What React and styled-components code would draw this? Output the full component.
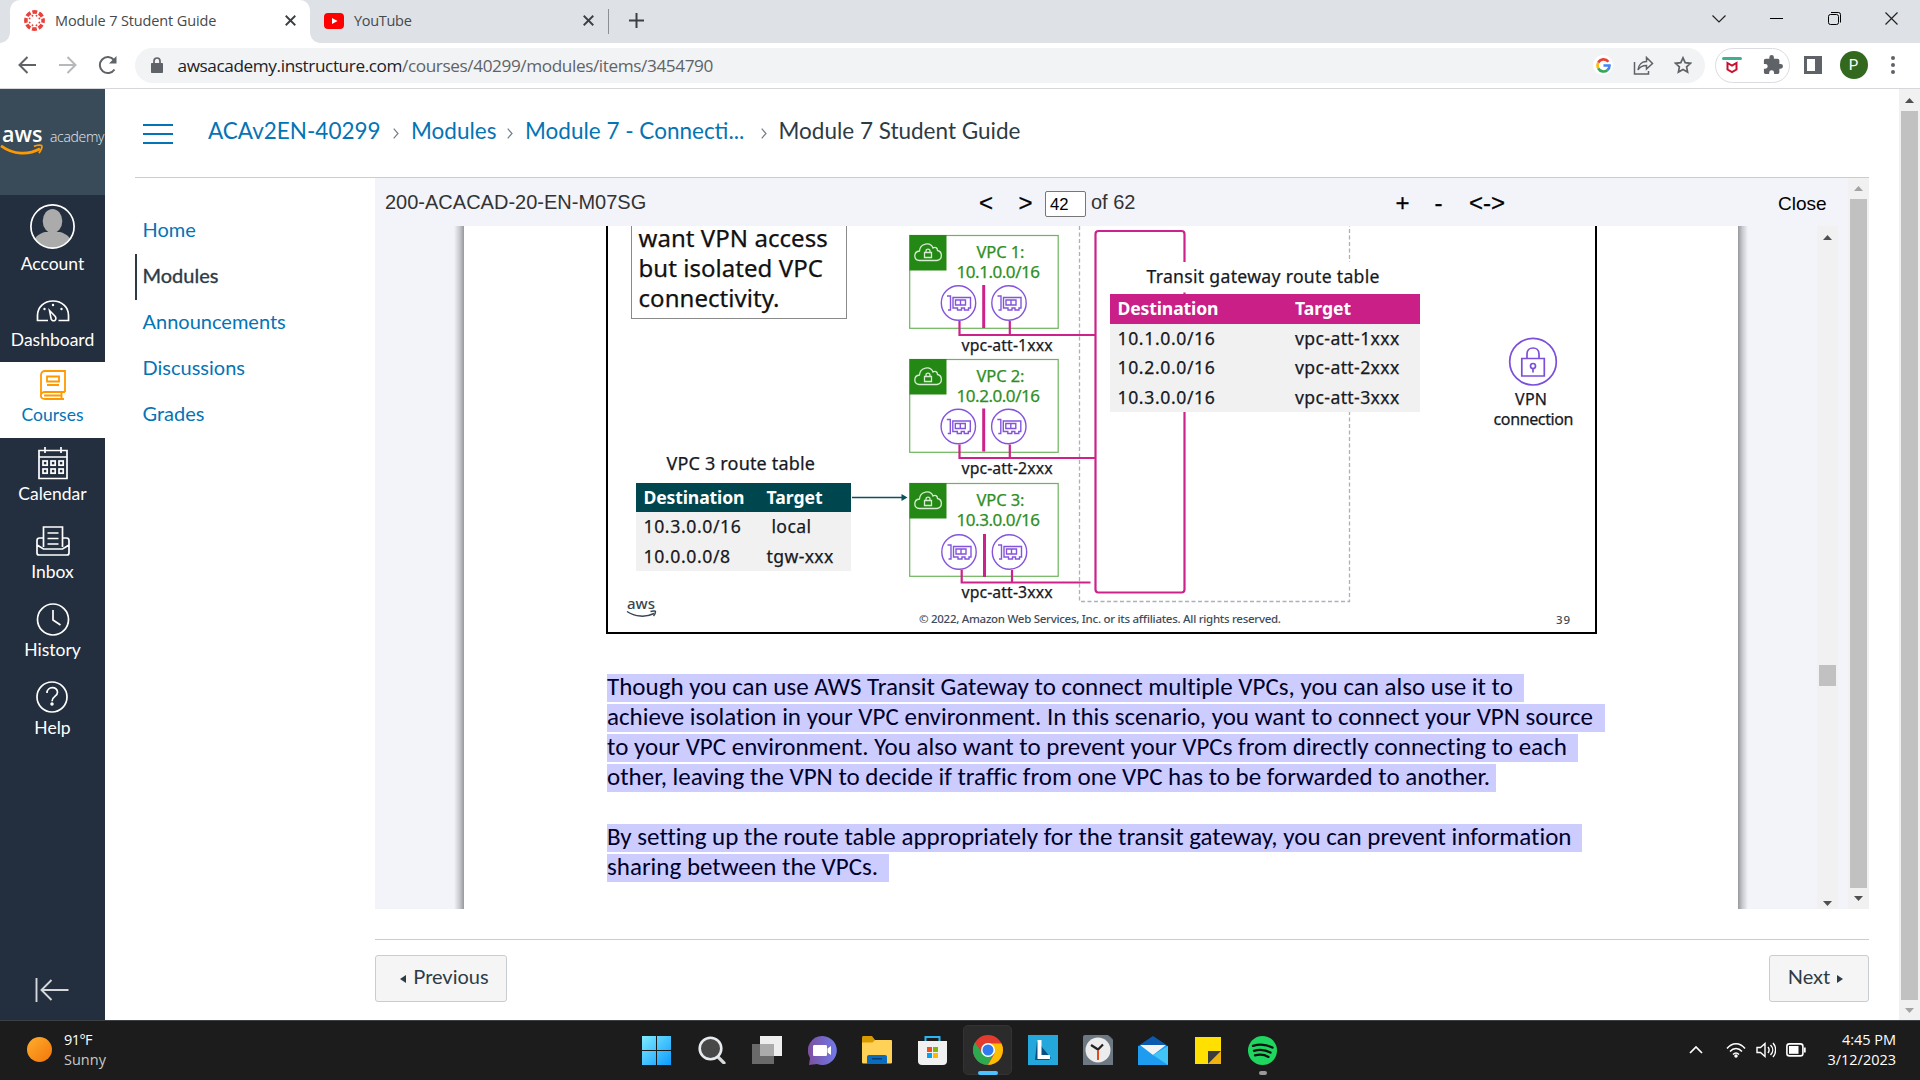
import React from "react";
import styled, { createGlobalStyle } from "styled-components";

const ui = `"Open Sans", "Noto Sans", sans-serif`;
const lato = `Lato, "Open Sans", sans-serif`;
const slideFont = `"Noto Sans", "Open Sans", sans-serif`;
const arial = `"Liberation Sans", Arial, sans-serif`;

const Global = createGlobalStyle`
  * { box-sizing: border-box; }
  body { margin: 0; overflow: hidden; background: #fff; }
  svg { display: block; flex: none; }
`;

const Screen = styled.div`
  width: 1920px;
  height: 1080px;
  display: flex;
  flex-direction: column;
  background: #fff;
  overflow: hidden;
`;

/* ---------- browser chrome ---------- */
const TabStrip = styled.div`
  height: 43px;
  flex: none;
  display: flex;
  background: #dee1e6;
  padding-left: 10px;
`;
const Tab = styled.div`
  position: relative;
  width: ${(p) => p.$w}px;
  height: 43px;
  display: flex;
  align-items: center;
  padding: 0 14px 2px ${(p) => p.$pl}px;
  gap: 10px;
  background: ${(p) => (p.$active ? "#fff" : "transparent")};
  border-radius: 10px 10px 0 0;
  font: 14.5px/20px ${ui};
  letter-spacing: ${(p) => p.$ls}px;
  color: #45494d;
  &::before, &::after {
    content: "";
    display: ${(p) => (p.$active ? "block" : "none")};
    position: absolute;
    bottom: 0;
    width: 10px;
    height: 10px;
  }
  &::before { left: -10px; background: radial-gradient(circle at 0 0, transparent 9.5px, #fff 10px); }
  &::after { right: -10px; background: radial-gradient(circle at 100% 0, transparent 9.5px, #fff 10px); }
`;
const Grow = styled.span`flex: 1; white-space: nowrap;`;
const TabRule = styled.div`width: 1px; height: 25px; margin: 9px 0 0; background: #8b8e92;`;
const NewTab = styled.div`padding: 13px 0 0 19.5px;`;
const WindowButtons = styled.div`
  margin-left: auto;
  display: flex;
  height: 37px;
  align-items: center;
`;
const WinButton = styled.div`width: 57.3px; display: flex; justify-content: center;`;

const Toolbar = styled.div`
  height: 46px;
  flex: none;
  display: flex;
  align-items: center;
  padding: 0 0 1px 17px;
  border-bottom: 1px solid #d5d7da;
`;
const NavIcons = styled.div`display: flex; gap: 20.5px; width: 118px;`;
const Omnibox = styled.div`
  width: 1570px;
  height: 35px;
  border-radius: 18px;
  background: #f1f3f4;
  display: flex;
  align-items: center;
  padding: 0 13px 0 16px;
  font: 17.2px/24px ${ui};
  letter-spacing: -0.4px;
  color: #202124;
  gap: 14.5px;
`;
const Url = styled(Grow)`padding-top: 1px;`;
const UrlPath = styled.span`color: #5f6368;`;
const OmniIcons = styled.div`display: flex; align-items: center; gap: 20px;`;
const GBadge = styled.div`
  width: 20px; height: 20px; border-radius: 50%; background: #fff;
  display: flex; align-items: center; justify-content: center;
`;
const ExtPill = styled.div`
  width: 75px;
  height: 35px;
  margin-left: 10px;
  border: 1px solid #dadce0;
  border-radius: 18px;
  display: flex;
  align-items: center;
  justify-content: space-between;
  padding: 0 6.5px 0 6px;
`;
const PanelIcon = styled.div`
  width: 18px; height: 18px; margin-left: 13.5px;
  border: 3px solid #5f6368; border-right-width: 7px;
`;
const Avatar = styled.div`
  width: 28px; height: 28px; border-radius: 50%; margin-left: 18px;
  background: #33691e; color: #fff;
  display: flex; align-items: center; justify-content: center;
  font: 15px/28px Roboto, sans-serif;
`;
const Dots = styled.div`
  display: flex; flex-direction: column; gap: 3px; margin-left: 23px;
  i { width: 4px; height: 4px; border-radius: 50%; background: #5f6368; }
`;

/* ---------- scrollbars ---------- */
const Bar = styled.div`
  width: 21px;
  flex: none;
  background: #f1f1f1;
  display: flex;
  flex-direction: column;
  align-items: center;
`;
const ArrowBox = styled.div`
  height: ${(p) => p.$h}px;
  width: 21px;
  flex: none;
  display: flex;
  align-items: center;
  justify-content: center;
`;
const Track = styled.div`flex: 1; width: 17px; padding-top: ${(p) => p.$top || 0}px;`;
const Thumb = styled.div`height: ${(p) => p.$h}; background: #c1c1c1;`;

function Arrow({ up, color, h }) {
  return (
    <ArrowBox $h={h}>
      <svg width="9" height="5" viewBox="0 0 9 5"><path d={up ? "M0 5L4.5 0 9 5z" : "M0 0h9L4.500 5z"} fill={color} /></svg>
    </ArrowBox>
  );
}
function Scrollbar({ topColor, bottomColor, topH, bottomH, offset, thumb }) {
  return (
    <Bar>
      <Arrow up color={topColor} h={topH} />
      <Track $top={offset}><Thumb $h={thumb} /></Track>
      <Arrow color={bottomColor} h={bottomH} />
    </Bar>
  );
}

/* ---------- Canvas page ---------- */
const Body = styled.div`flex: none; height: 931px; display: flex;`;
const Side = styled.div`
  width: 105px;
  flex: none;
  background: #232f3e;
  display: flex;
  flex-direction: column;
`;
const SideLogo = styled.div`
  height: 106px;
  flex: none;
  background: #394b58;
  display: flex;
  align-items: center;
  padding-bottom: 3px;
  color: #fff;
`;
const AwsMark = styled.div`
  width: 44px;
  padding-left: 2px;
  font: 600 21.5px/21px ${ui};
  color: #fff;
`;
const Academy = styled.span`
  font: 300 14px/18px ${ui};
  letter-spacing: -0.3px;
  color: #e6e9eb;
  margin: 0 0 7px 6px;
`;
const SideItem = styled.div`
  height: ${(p) => p.$h}px;
  flex: none;
  display: flex;
  flex-direction: column;
  align-items: center;
  justify-content: flex-end;
  gap: ${(p) => p.$gap || 4}px;
  padding-bottom: ${(p) => (p.$active ? 12 : 11)}px;
  background: ${(p) => (p.$active ? "#fff" : "transparent")};
  color: ${(p) => (p.$active ? "#0374b5" : "#fff")};
  font: 17.5px/22px ${lato};
`;
const Collapse = styled.div`margin: auto 0 17px 35px;`;

const Main = styled.div`
  width: 1734px;
  margin: 0 30px;
  flex: none;
  display: flex;
  flex-direction: column;
`;
const Crumbs = styled.div`
  height: 89px;
  flex: none;
  border-bottom: 1px solid #c7cdd1;
  display: flex;
  align-items: center;
  padding: 0 0 4px 8px;
  font: 22.5px/30px ${lato};
  color: #2d3b45;
  white-space: nowrap;
`;
const Burger = styled.div`
  width: 30px; height: 20px; margin: 5px 35px 0 0;
  display: flex; flex-direction: column; justify-content: space-between;
  i { height: 2px; background: #0374b5; }
`;
const CrumbLink = styled.span`color: #0374b5; width: ${(p) => p.$w}px;`;
const CrumbSep = styled.div`width: 30px; display: flex; justify-content: center; padding-top: 4px;`;
const Columns = styled.div`display: flex; flex: 1;`;
const CourseNav = styled.div`
  width: 240px;
  padding-top: 30px;
  font: 20px/42px ${lato};
`;
const CourseLink = styled.div`
  height: 46px;
  padding-left: ${(p) => (p.$active ? 5.5 : 7.5)}px;
  border-left: ${(p) => (p.$active ? "2px solid #2d3b45" : "0")};
  color: ${(p) => (p.$active ? "#2d3b45" : "#0374b5")};
  -webkit-text-stroke: ${(p) => (p.$active ? "0.35px #2d3b45" : "0")};
`;
const Content = styled.div`width: 1494px; display: flex; flex-direction: column;`;
const Frame = styled.div`height: 731px; flex: none; display: flex; background: #f3f4f9;`;
const Viewer = styled.div`flex: 1; display: flex; flex-direction: column;`;
const ViewerBar = styled.div`
  height: 48px;
  flex: none;
  display: flex;
  align-items: center;
  padding-left: 10px;
  font: 20px/24px ${arial};
  color: #333;
  white-space: nowrap;
`;
const Piece = styled.span`
  width: ${(p) => p.$w}px;
`;
const Tool = styled.span`
  width: ${(p) => p.$w}px;
  padding-top: 1px;
  color: #000;
  font-size: 24px;
  -webkit-text-stroke: 0.3px #000;
`;
const CloseLink = styled.span`padding-top: 3px; color: #000; font-size: 19px;`;
const PageInput = styled.div`
  width: 41px; height: 26px; margin: 3px 5px 0 0;
  border: 1px solid #767676; border-radius: 2px; background: #fff; color: #000;
  font: 16.67px/25px ${arial};
  padding-left: 4px;
`;
const DocRow = styled.div`height: 683px; display: flex;`;
const DocArea = styled.div`flex: 1; display: flex; padding-left: 79px;`;
const Shade = styled.div`
  width: 10px;
  background: linear-gradient(${(p) => p.$dir}, #97989c, #c9cacf 45%, #f3f4f9);
`;
const Paper = styled.div`
  width: 1274px;
  background: #fff;
  padding-left: 142px;
`;
const InnerBar = styled.div`display: flex; margin-right: 10px;`;

const Slide = styled.div`
  position: relative;
  width: 991px;
  height: 408px;
  border: 2px solid #000;
  border-top: 0;
`;
const Placed = styled.div`
  position: absolute;
  left: ${(p) => p.$x - 608}px;
  top: ${(p) => p.$y - 226}px;
`;
const Callout = styled(Placed)`
  width: 216px;
  height: 93px;
  border: 1px solid #8a8a8a;
  border-top: 0;
  padding-left: 6.5px;
  font: 24px/30px ${slideFont};
  letter-spacing: 0.05px;
  color: #111;
  -webkit-text-stroke: 0.25px #111;
  white-space: nowrap;
`;
const CalloutText = styled.div`margin-top: -3px;`;
const RouteTable = styled(Placed)`
  width: ${(p) => p.$w}px;
  background: #f1f1f1;
  font: 17.6px/29px ${slideFont};
  color: #16191f;
  white-space: nowrap;
`;
const RouteRow = styled.div`
  display: grid;
  grid-template-columns: ${(p) => p.$col}px 1fr;
  padding-left: 7.5px;
  height: 29.6px;
  background: ${(p) => p.$bg || "transparent"};
  color: ${(p) => (p.$bg ? "#fff" : "inherit")};
  font-weight: ${(p) => (p.$bg ? 700 : 400)};
  -webkit-text-stroke: ${(p) => (p.$bg ? "0" : "0.25px #16191f")};
  letter-spacing: ${(p) => (p.$bg ? -0.15 : 0.62)}px;
  span + span { letter-spacing: ${(p) => (p.$bg ? 0 : 0.38)}px; }
`;
const Notes = styled.div`
  padding: 40px 0 0 1px;
  font: 25px/26px Carlito, Calibri, "Open Sans", sans-serif;
  font-variant-ligatures: none;
  color: #00002b;
`;
const NoteLine = styled.div`
  width: ${(p) => p.$w}px;
  height: 28px;
  margin-bottom: ${(p) => (p.$last ? 32 : 2)}px;
  background: #ccccff;
  white-space: nowrap;
`;
const Pager = styled.div`
  margin-top: 30px;
  border-top: 1px solid #c7cdd1;
  padding-top: 15px;
  display: flex;
  justify-content: space-between;
`;
const PagerButton = styled.div`
  width: ${(p) => p.$w}px;
  height: 47px;
  border: 1px solid #c7cdd1;
  border-radius: 3px;
  background: #f5f5f5;
  display: flex;
  align-items: center;
  justify-content: center;
  gap: 7px;
  padding: ${(p) => (p.$next ? "0 7px 0 0" : "0 0 0 7px")};
  font: 20px/24px ${lato};
  color: #2d3b45;
  span { margin-bottom: 6px; }
`;

/* ---------- taskbar ---------- */
const Taskbar = styled.div`
  height: 60px;
  background: #1c1c1c;
  border-top: 1px solid #3c4043;
  display: flex;
  color: #fff;
  font: 14.5px/20px ${ui};
`;
const Weather = styled.div`
  width: 629.4px; padding: 0 0 2px 27px; display: flex; align-items: center; gap: 12px;
  letter-spacing: 0;
`;
const Sun = styled.div`width: 25px; height: 25px; border-radius: 50%; background: linear-gradient(135deg, #ffae2b, #f2750c);`;
const Temp = styled.div`letter-spacing: -0.6px;`;
const Dim = styled.div`color: #c8c8c8;`;
const Apps = styled.div`display: flex; width: 662px;`;
const AppSlot = styled.div`
  width: 55.1px;
  display: flex;
  align-items: center;
  justify-content: center;
  position: relative;
  padding-bottom: 1px;
  &::before {
    content: "";
    position: absolute;
    inset: 4px 3px 5px;
    border-radius: 5px;
    background: ${(p) => (p.$on ? "#2b2b2b" : "transparent")};
    border: 1px solid ${(p) => (p.$on ? "#333" : "transparent")};
  }
  &::after {
    content: "";
    position: absolute;
    bottom: 5px;
    width: ${(p) => (p.$on ? 20 : 8)}px;
    height: 4px;
    border-radius: 2px;
    background: ${(p) => (p.$on ? "#4cc2ff" : p.$idle ? "#9a9a9a" : "transparent")};
  }
  svg { position: relative; }
`;
const Tray = styled.div`flex: 1; display: flex; align-items: center; justify-content: flex-end; padding: 0 24px 2px 0;`;
const TrayIcons = styled.div`
  display: flex; align-items: center; gap: 10px;
  svg:first-child { margin-right: 13px; }
`;
const Clock = styled.div`width: 90px; text-align: right; letter-spacing: -0.02px;`;

/* ---------- icons ---------- */
const S = ({ w = 20, h = w, vb, children, ...r }) => (
  <svg width={w} height={h} viewBox={vb || `0 0 ${w} ${h}`} fill="none" {...r}>{children}</svg>
);
const CloseX = ({ size = 9 }) => (
  <S w={size} vb="0 0 9 9"><path d="M.6.6l7.800 7.800M8.400.6L.6 8.400" stroke="#3c4043" strokeWidth="1.500" /></S>
);
const CanvasLogo = () => (
  <S w={21} vb="0 0 20 20">
    <circle cx="10" cy="10" r="8.200" stroke="#e8403a" strokeWidth="3.400" strokeDasharray="4.600 1.840" strokeDashoffset="2.300" />
    {[0, 45, 90, 135, 180, 225, 270, 315].map((a) => (
      <circle key={a} cx="10" cy="5" r=".9" fill="#e8403a" transform={`rotate(${a + 22.5} 10 10)`} />
    ))}
  </S>
);
const Smile = ({ w, color }) => (
  <S w={w} h={w * 0.3} vb="0 0 36 11">
    <path d="M.5 1.500C11 9 23 9.500 33 4" stroke={color} strokeWidth="2.300" />
    <path d="M28 2c3-1.400 6-1.200 6.500-.5.500 1-.5 4-2.500 6" stroke={color} strokeWidth="1.500" />
  </S>
);
const Dashboard = () => (
  <S w={34} h={22}>
    <path d="M12 20.500H1.500v-5C1.500 7 8 1 17 1s15.500 6 15.500 14.500v5H22.500" stroke="#fff" strokeWidth="1.700" />
    <path d="M13.500 10.500l5.800 6c1 1.700.7 3.300-.5 4-1.300.7-2.800.2-3.600-1.300z" stroke="#fff" strokeWidth="1.600" />
    <g fill="#fff"><circle cx="17" cy="5" r="1.200" /><circle cx="25.500" cy="9" r="1.200" /><circle cx="8.500" cy="9" r="1.200" /></g>
  </S>
);
const Courses = () => (
  <S w={26} h={30} stroke="#ff9900" strokeWidth="1.800">
    <path d="M25 22H5c-5.500 0-5.500 7 0 7h19M1 25V5c0-2.500 1.500-4 4-4h20v21M21.500 22v7M4 25.500h17" />
    <path d="M7 6.500h12v5H7zM7 15h12" />
  </S>
);
const Calendar = () => (
  <S w={30} h={33} stroke="#fff" strokeWidth="1.700">
    <path d="M1 3.500h28v28H1zM1 10h28M7 0v6M23 0v6" />
    {[5, 13, 21].map((x) => [14, 22].map((y) => <rect key={x + "-" + y} x={x} y={y} width="4.200" height="4.200" />))}
  </S>
);
const Inbox = () => (
  <S w={34} h={30} stroke="#fff" strokeWidth="1.700">
    <path d="M7.500 21V1h19v20M7.500 12H3.500C2 12 1 13 1 14.500V27c0 1.200.8 2 2 2h28c1.200 0 2-.8 2-2V14.500c0-1.500-1-2.500-2.500-2.500h-4M1 19l6.500 4h19l6.500-4M11.500 7h11M11.500 12.500h11M11.500 18h11" />
  </S>
);
const History = () => (
  <S w={34} h={33} stroke="#fff" strokeWidth="1.700"><circle cx="17" cy="16.500" r="15.500" /><path d="M17 7v10l7.500 5" /></S>
);
const Help = () => (
  <S w={34} h={32} stroke="#fff" strokeWidth="1.700">
    <circle cx="16" cy="16" r="15" />
    <path d="M11 12c0-7 10.500-7 10.500-.8 0 4.500-5.500 4-5.500 9" /><circle cx="16" cy="23" r=".9" fill="#fff" />
  </S>
);
const UserPic = () => (
  <S w={45}>
    <defs><clipPath id="u"><circle cx="22.500" cy="22.500" r="21.500" /></clipPath></defs>
    <g clipPath="url(#u)" fill="#ababab"><ellipse cx="22.500" cy="17" rx="9.800" ry="12" /><path d="M2 45c0-11 6-15 13-17h15c7 2 13 6 13 17z" /></g>
    <circle cx="22.500" cy="22.500" r="21.600" stroke="#fff" strokeWidth="1.700" />
  </S>
);

const PINK = "#cd2289";
const GREEN = "#248814";
const Nic = ({ x, y }) => (
  <g transform={`translate(${x} ${y})`} fill="none" stroke="#8455dc" strokeWidth="1.400">
    <circle r="17.200" fill="#fff" />
    <path d="M-11.500 -7h3.500v14h-2.500M-5.500 -5.500h17.500v10.500h-2v2h-4v-2h-3v2h-4v-2h-4.500z" />
    <path d="M-3 -3h10v5h-10zM2 -3v5" />
  </g>
);
function VpcNode({ n, y, cx, cy, barX, lineX, lineY, endX }) {
  return (
    <g fontFamily={slideFont}>
      <rect x="909.700" y={y + 0.5} width="148.500" height="92.800" fill="#fff" stroke="#6cb55c" strokeWidth="1.200" />
      <rect x="909.500" y={y} width="37" height="35.500" fill={GREEN} />
      <g transform={`translate(914 ${y + 8})`} fill="none" stroke="#d7ecd3" strokeWidth="1.300">
        <path d="M5.500 17.500c-6.500-.5-6-9 0-9.500C6 0 16.500-1.500 19 5c2-1.500 4.500-.5 4.500 2.500 5 1 5.500 9-.5 10z" />
        <path d="M10.500 9.500h7v5h-7zM12 9.500V8c0-2.500 4-2.500 4 0v1.500" />
      </g>
      <g fill="#2f8f1e" stroke="#2f8f1e" strokeWidth=".25" fontSize="17">
        <text x="976.500" y={y + 23.400} textLength="48" fontSize="16.500">VPC {n}:</text>
        <text x="956.500" y={y + 42.700} textLength="83.500">10.{n}.0.0/16</text>
      </g>
      <Nic x={cx} y={cy} /><Nic x={cx + 50.500} y={cy} />
      <g stroke={PINK} strokeWidth="2.200" fill="none">
        <path d={`M${barX} ${cy - 18}V${cy + 25}`} strokeWidth="3" />
        <path d={`M${lineX} ${cy + 18}V${lineY}H${endX}M${lineX + 50.300} ${cy + 18}V${lineY}`} />
      </g>
      <text x="961.500" y={lineY + 15.700} textLength="91" fontSize="15.800" fill="#16191f" stroke="#16191f" strokeWidth=".25">vpc-att-{n}xxx</text>
    </g>
  );
}
const Diagram = () => (
  <svg width="987" height="406" viewBox="608 226 987 406">
    <path d="M1079.500 226V601.500H1349.500V226" fill="none" stroke="#a9b1bd" strokeWidth="1.300" strokeDasharray="4 2.500" />
    <rect x="1095.500" y="231" width="89" height="361.500" rx="3" fill="none" stroke={PINK} strokeWidth="2.200" />
    <rect x="1140" y="262" width="248" height="30.500" fill="#fff" />
    <VpcNode n={1} y={235} cx={958.500} cy={303} barX={983.700} lineX={959.500} lineY={335} endX={1095} />
    <VpcNode n={2} y={359} cx={958.300} cy={426.500} barX={983.700} lineX={959.500} lineY={458} endX={1095} />
    <VpcNode n={3} y={483} cx={959} cy={552} barX={984.500} lineX={961.700} lineY={582.500} endX={1090.500} />
    <path d="M852 497.500h51" stroke="#0b525b" strokeWidth="1.700" /><path d="M901.500 494l6 3.500-6 3.500z" fill="#0b525b" />
    <g fontFamily={slideFont} fill="#16191f">
      <g stroke="#16191f" strokeWidth=".25">
        <text x="666.500" y="470.300" textLength="148.500" fontSize="18">VPC 3 route table</text>
        <text x="1146.500" y="283" textLength="233" fontSize="17.600">Transit gateway route table</text>
        <text x="1515" y="405.300" textLength="32" fontSize="16">VPN</text>
        <text x="1493.500" y="424.700" textLength="80" fontSize="16">connection</text>
      </g>
      <text x="627" y="609" textLength="28" fontSize="15" fontWeight="500" fill="#3a4553">aws</text>
      <g fill="#414b59" fontSize="11.500" fontWeight="500">
        <text x="919" y="623" textLength="362">© 2022, Amazon Web Services, Inc. or its affiliates. All rights reserved.</text>
        <text x="1556" y="624" textLength="14">39</text>
      </g>
    </g>
    <path d="M627 611.500c8 5.500 19 6 27 2M650.500 611.500c2.500-.8 5-.6 5 0s-.5 3-2 4.500" fill="none" stroke="#3a4553" strokeWidth="1.500" />
    <g fill="none" stroke="#7b4fdb" strokeWidth="1.700">
      <circle cx="1533" cy="361.700" r="23.300" />
      <path d="M1521.800 358.500h22.500v17.500h-22.500zM1527 358.500v-4.500c0-8 12-8 12 0v4.500" />
      <circle cx="1533" cy="366" r="2.500" /><path d="M1533 368.500v4" />
    </g>
  </svg>
);

const notes = [
  ["Though you can use AWS Transit Gateway to connect multiple VPCs, you can also use it to", 917],
  ["achieve isolation in your VPC environment. In this scenario, you want to connect your VPN source", 998],
  ["to your VPC environment. You also want to prevent your VPCs from directly connecting to each", 971],
  ["other, leaving the VPN to decide if traffic from one VPC has to be forwarded to another.", 889, true],
  ["By setting up the route table appropriately for the transit gateway, you can prevent information", 975],
  ["sharing between the VPCs.", 282],
];

export default function App() {
  return (
    <Screen>
      <Global />
      <TabStrip>
        <Tab $active $w={300} $pl={14} $ls={-0.13}>
          <CanvasLogo /><Grow>Module 7 Student Guide</Grow>
          <CloseX size={11} />
        </Tab>
        <Tab $w={298} $pl={14} $ls={-0.3}>
          <S w={20} h={16}><rect width="20" height="16" rx="4" fill="#f00" /><path d="M8 5l5.500 3L8 11z" fill="#fff" /></S>
          <Grow>YouTube</Grow>
          <CloseX size={11} />
        </Tab>
        <TabRule />
        <NewTab><S w={15}><path d="M7.500 0v15M0 7.500h15" stroke="#3c4043" strokeWidth="2" /></S></NewTab>
        <WindowButtons>
          <WinButton><S w={14} h={8}><path d="M.5.5L7 7 13.500.5" stroke="#222" strokeWidth="1.200" /></S></WinButton>
          <WinButton><S w={13} h={1}><path d="M0 .5h13" stroke="#000" /></S></WinButton>
          <WinButton><S w={13}><rect x=".5" y="2.500" width="10" height="10" rx="2" stroke="#000" /><path d="M3 .5h7.500a2 2 0 012 2v8" stroke="#000" /></S></WinButton>
          <WinButton><S w={13}><path d="M.5.5l12 12M12.500.5l-12 12" stroke="#222" strokeWidth="1.200" /></S></WinButton>
        </WindowButtons>
      </TabStrip>
      <Toolbar>
        <NavIcons>
          <S w={20}><path d="M19 10H3M10.500 2L2.500 10l8 8" stroke="#5f6368" strokeWidth="2" /></S>
          <S w={20}><path d="M1 10h16M9.500 2l8 8-8 8" stroke="#b6b8ba" strokeWidth="2" /></S>
          <S w={20}><path d="M16.500 14.500A8 8 0 1 1 16 5" stroke="#5f6368" strokeWidth="2" /><path d="M18.500 1v7.500H11z" fill="#5f6368" /></S>
        </NavIcons>
        <Omnibox>
          <S w={12} h={16}><path d="M1 6h10c.6 0 1 .4 1 1v8c0 .6-.4 1-1 1H1c-.6 0-1-.4-1-1V7c0-.6.4-1 1-1z" fill="#5f6368" /><path d="M3 7V4c0-4 6-4 6 0v3" stroke="#5f6368" strokeWidth="1.700" /></S>
          <Url>awsacademy.instructure.com<UrlPath>/courses/40299/modules/items/3454790</UrlPath></Url>
          <OmniIcons>
            <GBadge>
              <S w={15} vb="0 0 16 16" strokeWidth="2.800">
                <path d="M13.200 4A6.400 6.400 0 0 0 2.400 5" stroke="#ea4335" /><path d="M2.400 5a6.500 6.500 0 0 0 0 6" stroke="#fbbc05" />
                <path d="M2.400 11a6.400 6.400 0 0 0 9.900 1.800" stroke="#34a853" /><path d="M12.200 12.900A6.300 6.300 0 0 0 14.400 8H8" stroke="#4285f4" />
              </S>
            </GBadge>
            <S w={21} h={19} stroke="#5f6368" strokeWidth="1.500"><path d="M1.500 6v12h14v-3M5 14c.5-5.500 4-8.500 8.500-8.500V1.500L19.500 7.500l-6 5.500V9.500C10 9.500 7 10.500 5 14z" /></S>
            <S w={18} h={18} vb="0 0 18 18" stroke="#5f6368" strokeWidth="1.700"><path d="M9 1.800l2.200 4.900 5.300.6-3.900 3.600 1 5.200L9 13.500l-4.600 2.600 1-5.200L1.500 7.300l5.300-.6z" /></S>
          </OmniIcons>
        </Omnibox>
        <ExtPill>
          <S w={20} h={18}><rect y="1" width="20" height="3" rx="1.500" fill="#3fb08f" /><path d="M5.500 7l4.500 2.500L14.500 7v6.500L10 16l-4.500-2.500z" stroke="#c8102e" strokeWidth="2" /></S>
          <S w={20} vb="1 1 22 22"><path d="M20.500 11H19V7c0-1.100-.9-2-2-2h-4V3.500a2.500 2.500 0 0 0-5 0V5H4c-1.100 0-2 .9-2 2v3.800h1.500a2.700 2.700 0 0 1 0 5.400H2V20c0 1.100.9 2 2 2h3.800v-1.500a2.700 2.700 0 0 1 5.400 0V22H17c1.100 0 2-.9 2-2v-4h1.500a2.500 2.500 0 0 0 0-5z" fill="#5f6368" /></S>
        </ExtPill>
        <PanelIcon />
        <Avatar>P</Avatar>
        <Dots><i /><i /><i /></Dots>
      </Toolbar>

      <Body>
        <Side>
          <SideLogo>
            <div>
              <AwsMark>aws</AwsMark>
              <Smile w={44} color="#ff9900" />
            </div>
            <Academy>academy</Academy>
          </SideLogo>
          <SideItem $h={91}><UserPic />Account</SideItem>
          <SideItem $h={76} $gap={7}><Dashboard />Dashboard</SideItem>
          <SideItem $h={76} $active><Courses />Courses</SideItem>
          <SideItem $h={78} $gap={3}><Calendar />Calendar</SideItem>
          <SideItem $h={78} $gap={5}><Inbox />Inbox</SideItem>
          <SideItem $h={78} $gap={3}><History />History</SideItem>
          <SideItem $h={78}><Help />Help</SideItem>
          <Collapse><S w={34} h={26}><path d="M1.500 1v24M33.500 13H6M16.500 3L6.500 13l10 10" stroke="#d5d8db" strokeWidth="1.900" /></S></Collapse>
        </Side>

        <Main>
          <Crumbs>
            <Burger><i /><i /><i /></Burger>
            <CrumbLink $w={173}>ACAv2EN-40299</CrumbLink>
            <CrumbSep><Chev /></CrumbSep>
            <CrumbLink $w={84}>Modules</CrumbLink>
            <CrumbSep><Chev /></CrumbSep>
            <CrumbLink $w={223.5}>Module 7 - Connecti...</CrumbLink>
            <CrumbSep><Chev /></CrumbSep>
            Module 7 Student Guide
          </Crumbs>
          <Columns>
            <CourseNav>
              <CourseLink>Home</CourseLink>
              <CourseLink $active>Modules</CourseLink>
              <CourseLink>Announcements</CourseLink>
              <CourseLink>Discussions</CourseLink>
              <CourseLink>Grades</CourseLink>
            </CourseNav>
            <Content>
              <Frame>
                <Viewer>
                  <ViewerBar>
                    <Piece $w={594}>200-ACACAD-20-EN-M07SG</Piece>
                    <Tool $w={39.5}>&lt;</Tool>
                    <Tool $w={26.5}>&gt;</Tool>
                    <PageInput>42</PageInput>
                    <Piece $w={304.5}>of 62</Piece>
                    <Tool $w={39}>+</Tool>
                    <Tool $w={34.5}>-</Tool>
                    <Tool $w={309}>&lt;-&gt;</Tool>
                    <CloseLink>Close</CloseLink>
                  </ViewerBar>
                  <DocRow>
                    <DocArea>
                      <Shade $dir="to left" />
                      <Paper>
                        <Slide>
                          <Diagram />
                          <Callout $x={631} $y={226}>
                            <CalloutText>want VPN access<br />but isolated VPC<br />connectivity.</CalloutText>
                          </Callout>
                          <RouteTable $x={1110} $y={294} $w={310}>
                            <RouteRow $col={177.5} $bg="#c91f86">
                              <span>Destination</span><span>Target</span>
                            </RouteRow>
                            <RouteRow $col={177.5}><span>10.1.0.0/16</span><span>vpc-att-1xxx</span></RouteRow>
                            <RouteRow $col={177.5}><span>10.2.0.0/16</span><span>vpc-att-2xxx</span></RouteRow>
                            <RouteRow $col={177.5}><span>10.3.0.0/16</span><span>vpc-att-3xxx</span></RouteRow>
                          </RouteTable>
                          <RouteTable $x={636} $y={482.5} $w={215}>
                            <RouteRow $col={123} $bg="#00464f"><span>Destination</span><span>Target</span></RouteRow>
                            <RouteRow $col={123}><span>10.3.0.0/16</span><span>&nbsp;local</span></RouteRow>
                            <RouteRow $col={123}><span>10.0.0.0/8</span><span>tgw-xxx</span></RouteRow>
                          </RouteTable>
                        </Slide>
                        <Notes>
                          {notes.map(([t, w, last]) => (
                            <NoteLine key={t} $w={w} $last={last}>{t}</NoteLine>
                          ))}
                        </Notes>
                      </Paper>
                      <Shade $dir="to right" />
                    </DocArea>
                    <InnerBar>
                      <Scrollbar topColor="#505050" bottomColor="#505050" topH={23} bottomH={12} offset={416} thumb="21px" />
                    </InnerBar>
                  </DocRow>
                </Viewer>
                <Scrollbar topColor="#a3a3a3" bottomColor="#505050" topH={21} bottomH={21} thumb="100%" />
              </Frame>
              <Pager>
                <PagerButton $w={132}><S w={6} h={8}><path d="M6 0v8L0 4z" fill="#2d3b45" /></S><span>Previous</span></PagerButton>
                <PagerButton $w={100} $next><span>Next</span><S w={6} h={8}><path d="M0 0v8l6-4z" fill="#2d3b45" /></S></PagerButton>
              </Pager>
            </Content>
          </Columns>
        </Main>
        <Scrollbar topColor="#505050" bottomColor="#a3a3a3" topH={22} bottomH={20} thumb="100%" />
      </Body>

      <Taskbar>
        <Weather><Sun /><div><Temp>91°F</Temp><Dim>Sunny</Dim></div></Weather>
        <Apps>
          <AppSlot><S w={29}><defs><linearGradient id="wn" x2="1" y2="1"><stop stopColor="#7fecff" /><stop offset="1" stopColor="#0c9bff" /></linearGradient></defs><path d="M0 0h14v14H0zM15 0h14v14H15zM0 15h14v14H0zM15 15h14v14H15z" fill="url(#wn)" /></S></AppSlot>
          <AppSlot><S w={28}><path d="M18 19l8 8" stroke="#d6d9dc" strokeWidth="3.200" strokeLinecap="round" /><circle cx="12.500" cy="12.500" r="10.800" fill="#484848" stroke="#e8ebee" strokeWidth="2.600" /></S></AppSlot>
          <AppSlot><S w={30} h={28}><path d="M8 0h22v20H8z" fill="#eee" /><path d="M0 8h22v20H0z" fill="#6a6a6a" /><path d="M8 8h14v12H8z" fill="#ababab" /></S></AppSlot>
          <AppSlot><S w={29}><defs><linearGradient id="ch" x2="1"><stop stopColor="#7d4f9e" /><stop offset="1" stopColor="#6f7bea" /></linearGradient></defs><path d="M14.500 0a14.500 14.500 0 1 1-5.500 28L1 29l1-7A14.500 14.500 0 0 1 14.500 0z" fill="url(#ch)" /><path d="M6.500 9h11c1 0 1.500.6 1.500 1.500v8c0 1-.6 1.500-1.500 1.500h-11C5.600 20 5 19.500 5 18.500v-8C5 9.600 5.600 9 6.500 9zM19.500 12.500L23 10v9l-3.500-2.500z" fill="#fff" /></S></AppSlot>
          <AppSlot><S w={30} h={28}><path d="M0 1.500C0 .6.600 0 1.500 0H10l3 4v4H0z" fill="#d99a00" /><path d="M0 6.500h10.500L13 4h16c.6 0 1 .4 1 1v21c0 1-.5 1.500-1.500 1.500h-27C.6 27.500 0 27 0 26z" fill="#ffd257" /><path d="M5 28v-7c0-1.300.8-2 2-2h16c1.200 0 2 .7 2 2v7z" fill="#0a6cbd" /><path d="M10 22.800h10" stroke="#063f78" strokeWidth="1.500" /></S></AppSlot>
          <AppSlot><S w={29}><path d="M7.500 6V1h14v5" stroke="#2bb6f0" strokeWidth="2" /><path d="M0 5h29v20c0 2.500-1.500 4-4 4H4c-2.500 0-4-1.500-4-4z" fill="#f1f1f1" /><path d="M9 11h5v5H9z" fill="#f25022" /><path d="M15 11h5v5h-5z" fill="#7fba00" /><path d="M9 17h5v5H9z" fill="#00a4ef" /><path d="M15 17h5v5h-5z" fill="#ffb900" /></S></AppSlot>
          <AppSlot $on><S w={30}><circle cx="15" cy="15" r="15" fill="#e33b2e" /><path d="M2 7.500A15 15 0 0 0 15 30l6-12H9z" fill="#2da94f" /><path d="M28.500 8.500H15l6.500 10L15 30A15 15 0 0 0 28.500 8.500z" fill="#fdbd00" /><circle cx="15" cy="15" r="7" fill="#fff" /><circle cx="15" cy="15" r="5.500" fill="#2f7cf0" /></S></AppSlot>
          <AppSlot><S w={30}><path d="M0 0h30v30H0z" fill="#24a8dc" /><path d="M9 6L7 25h14l2-2z" fill="#0d4f80" /><path d="M9.500 5h4v15H22v4H9.500z" fill="#fff" /></S></AppSlot>
          <AppSlot><S w={30}><path d="M24 3l3-2 3 3-2 3z" fill="#444" /><path d="M0 2c0-1.200.8-2 2-2h23l5 5v25H0z" fill="#6d7883" /><circle cx="15" cy="15" r="12.500" fill="#ececec" /><path d="M8 10l7 4.500 5-5" stroke="#222" strokeWidth="2.200" /><path d="M15 15v10" stroke="#e0491b" strokeWidth="2" /></S></AppSlot>
          <AppSlot><S w={30} h={29}><path d="M0 10L15 0l15 10v4H0z" fill="#0a5bb0" /><path d="M0 10h30v19H0z" fill="#1e9df0" /><path d="M2 9h26L15 19z" fill="#f3f3f3" /><path d="M30 10v19L15 19z" fill="#42c4f7" /></S></AppSlot>
          <AppSlot><S w={26} h={27}><path d="M0 0h26v14L13 27H0z" fill="#ffe000" /><path d="M13 14h13v0L13 27z" fill="#3b3b3b" /><path d="M26 14v13H13z" fill="#eeb211" /></S></AppSlot>
          <AppSlot $idle><S w={29}><circle cx="14.500" cy="14.500" r="14.500" fill="#1fd760" /><path d="M5 9.800c6.500-2 14-1.200 19.500 1.800M6 14.800c5.500-1.600 11.500-1 16.500 1.800M7 19.300c4.500-1.200 9.500-.8 13.500 1.600" stroke="#111" strokeWidth="2.300" strokeLinecap="round" /></S></AppSlot>
        </Apps>
        <Tray>
          <TrayIcons>
            <S w={14} h={8}><path d="M1 7l6-6 6 6" stroke="#fff" strokeWidth="1.700" /></S>
            <S w={20} h={16} stroke="#fff" strokeWidth="1.500"><path d="M1 6.500c5-6.500 13-6.500 18 0M4 9.500c3.500-4 8.500-4 12 0M7 12.500c2-2 4-2 6 0" /><circle cx="10" cy="14" r="1" fill="#fff" /></S>
            <S w={20} h={16} stroke="#fff" strokeWidth="1.400"><path d="M1 5.500h3.500L9 1.500v13l-4.500-4H1zM12 5c1.500 2 1.500 4 0 6M14.500 3c3 3 3 7 0 10M17 1c3.500 4 3.500 10 0 14" /></S>
            <S w={20} h={14}><rect x=".9" y=".9" width="16" height="12" rx="2.500" stroke="#fff" strokeWidth="1.600" /><rect x="3" y="3" width="9.500" height="7.800" fill="#fff" /><path d="M18.800 4.500v5" stroke="#fff" strokeWidth="1.800" /></S>
          </TrayIcons>
          <Clock>4:45 PM<br />3/12/2023</Clock>
        </Tray>
      </Taskbar>
    </Screen>
  );
}

function Chev() {
  return <S w={6} h={11}><path d="M.7.700l4.300 4.800L.7 10.300" stroke="#73818c" strokeWidth="1.200" /></S>;
}
